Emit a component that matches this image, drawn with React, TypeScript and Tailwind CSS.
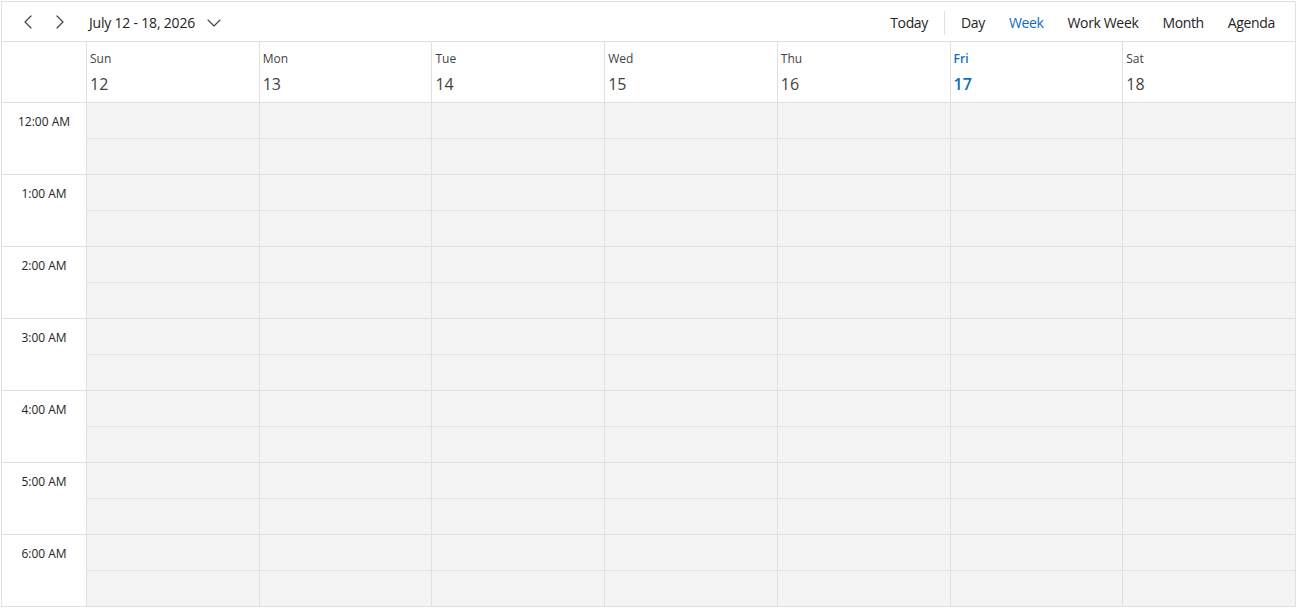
import { ChevronDown, ChevronLeft, ChevronRight } from 'lucide-react'

const days = [
  { name: 'Sun', date: 12 },
  { name: 'Mon', date: 13 },
  { name: 'Tue', date: 14 },
  { name: 'Wed', date: 15 },
  { name: 'Thu', date: 16 },
  { name: 'Fri', date: 17, today: true },
  { name: 'Sat', date: 18 },
]

const hours = ['12:00 AM', '1:00 AM', '2:00 AM', '3:00 AM', '4:00 AM', '5:00 AM', '6:00 AM']

const views = ['Day', 'Week', 'Work Week', 'Month', 'Agenda']

export default function App() {
  return (
    <div className="h-[608px] overflow-hidden bg-white p-px font-['Open_Sans',sans-serif] text-[#242424]">
      <div className="border border-b-0 border-[#e0e0e0]">
        {/* toolbar */}
        <div className="flex h-10 items-center border-b border-[#e0e0e0] pl-[10px] pr-2">
          <button type="button" className="flex h-8 w-8 items-center justify-center text-[#424242]">
            <ChevronLeft className="h-6 w-6" strokeWidth={1.2} />
          </button>
          <button type="button" className="flex h-8 w-8 items-center justify-center text-[#424242]">
            <ChevronRight className="h-6 w-6" strokeWidth={1.2} />
          </button>
          <button type="button" className="ml-[13px] mt-[2px] flex items-center gap-[7px] text-[14px] tracking-[-0.2px]">
            July 12 - 18, 2026
            <ChevronDown className="h-[24px] w-[24px] text-[#424242]" strokeWidth={1.1} />
          </button>

          <div className="ml-auto mt-[2px] flex items-center text-[14px] tracking-[-0.35px]">
            <button type="button" className="px-3">Today</button>
            <div className="mx-[4px] h-6 w-px bg-[#e0e0e0]" />
            {views.map((v) => (
              <button
                key={v}
                type="button"
                className={v === 'Week' ? 'px-3 text-[#0f6cbd]' : 'px-3'}
              >
                {v}
              </button>
            ))}
          </div>
        </div>

        {/* header row */}
        <div className="grid h-[61px] grid-cols-[84px_repeat(7,1fr)] border-b border-[#e0e0e0]">
          <div />
          {days.map((d) => (
            <div
              key={d.name}
              className={
                'border-l border-[#e0e0e0] pl-[3px] pt-[9px] ' + (d.today ? 'text-[#0f6cbd]' : 'text-[#424242]')
              }
            >
              <div className={d.today ? 'text-[12px] font-semibold leading-4' : 'text-[12px] leading-4'}>{d.name}</div>
              <div className={d.today ? 'mt-[5px] text-[16px] font-semibold leading-6' : 'mt-[5px] text-[16px] leading-6'}>
                {d.date}
              </div>
            </div>
          ))}
        </div>

        {/* time grid */}
        <div className="grid grid-cols-[84px_repeat(7,1fr)]">
          {hours.map((h) => (
            <div key={h} className="contents">
              <div className="h-[72px] border-b border-[#e0e0e0] pt-[10px] text-center text-[12px] text-[#242424]">
                {h}
              </div>
              {days.map((d) => (
                <div key={d.name} className="flex h-[72px] flex-col border-b border-l border-[#e0e0e0] bg-[#f4f4f4]">
                  <div className="h-9 border-b border-[#e6e6e6]" />
                  <div className="flex-1" />
                </div>
              ))}
            </div>
          ))}
        </div>
      </div>
    </div>
  )
}
